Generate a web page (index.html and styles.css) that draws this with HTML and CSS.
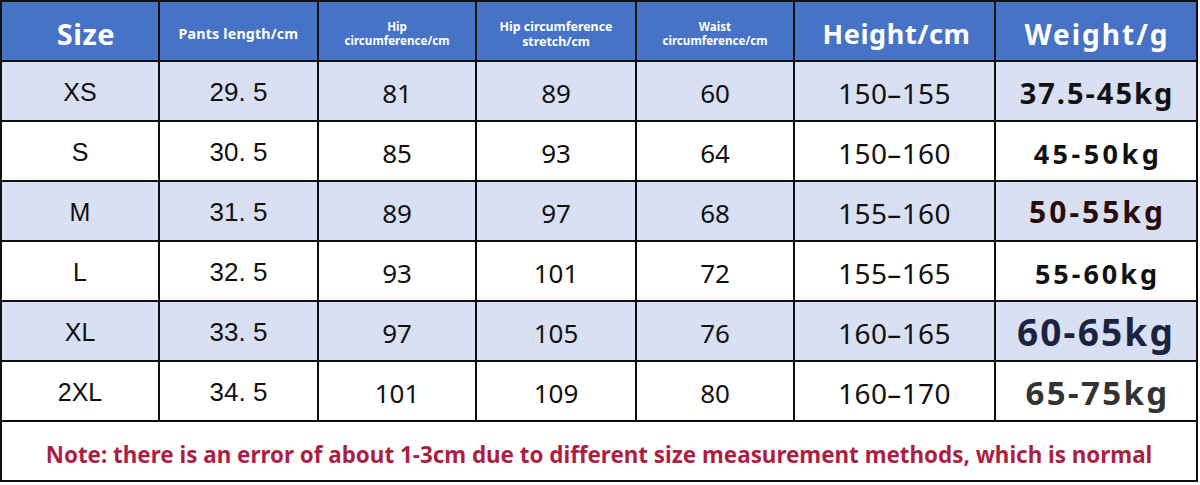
FILE: index.html
```html
<!DOCTYPE html>
<html lang="en">
<head>
<meta charset="utf-8">
<title>Size chart</title>
<link rel="stylesheet" href="styles.css">
</head>
<body>
<div class="chart">
  <div class="cell head head-xl">Size</div>
  <div class="cell head head-s">Pants length/cm</div>
  <div class="cell head head-xs">Hip<br>circumference/cm</div>
  <div class="cell head head-s2">Hip circumference<br>stretch/cm</div>
  <div class="cell head head-xs">Waist<br>circumference/cm</div>
  <div class="cell head head-l">Height/cm</div>
  <div class="cell head head-l2">Weight/g</div>

  <div class="cell alt sz">XS</div><div class="cell alt len">29. 5</div><div class="cell alt num">81</div><div class="cell alt num">89</div><div class="cell alt num">60</div><div class="cell alt num hgt">150–155</div><div class="cell alt wt w1">37.5-45kg</div>
  <div class="cell sz">S</div><div class="cell len">30. 5</div><div class="cell num">85</div><div class="cell num">93</div><div class="cell num">64</div><div class="cell num hgt">150–160</div><div class="cell wt w2">45-50kg</div>
  <div class="cell alt sz">M</div><div class="cell alt len">31. 5</div><div class="cell alt num">89</div><div class="cell alt num">97</div><div class="cell alt num">68</div><div class="cell alt num hgt">155–160</div><div class="cell alt wt w3">50-55kg</div>
  <div class="cell sz">L</div><div class="cell len">32. 5</div><div class="cell num">93</div><div class="cell num">101</div><div class="cell num">72</div><div class="cell num hgt">155–165</div><div class="cell wt w4">55-60kg</div>
  <div class="cell alt sz">XL</div><div class="cell alt len">33. 5</div><div class="cell alt num">97</div><div class="cell alt num">105</div><div class="cell alt num">76</div><div class="cell alt num hgt">160–165</div><div class="cell alt wt w5">60-65kg</div>
  <div class="cell sz">2XL</div><div class="cell len">34. 5</div><div class="cell num">101</div><div class="cell num">109</div><div class="cell num">80</div><div class="cell num hgt">160–170</div><div class="cell wt w6">65-75kg</div>

  <div class="cell note">Note: there is an error of about 1-3cm due to different size measurement methods, which is normal</div>
</div>
</body>
</html>
```
FILE: styles.css
```css
html, body {
  margin: 0;
  padding: 0;
  background: #ffffff;
}

.chart {
  width: 1198px;
  display: grid;
  grid-template-columns: 156px 157px 156px 158px 156px 199px 200px;
  grid-template-rows: 58px repeat(6, 58px) 58px;
  gap: 2px;
  padding: 2px;
  box-sizing: border-box;
  background: #101010;
}

.cell {
  display: flex;
  align-items: center;
  justify-content: center;
  text-align: center;
  background: #ffffff;
  color: #111111;
}

.alt {
  background: #d9e0f4;
}

.head {
  background: #4673c6;
  color: #ffffff;
  font-family: "Noto Sans", "Open Sans", sans-serif;
  font-weight: 700;
  padding-top: 5px;
}

.head-xl { font-size: 29px; padding-left: 12px; letter-spacing: 0.5px; }
.head-l { font-size: 27px; letter-spacing: 0.6px; padding-left: 4px; }
.head-l2 { font-size: 28px; letter-spacing: 2px; padding-left: 2px; }
.head-s { font-size: 14.2px; letter-spacing: 0.2px; }
.head-s2 { font-size: 12.4px; line-height: 15px; }
.head-xs { font-size: 11.6px; line-height: 14px; }

.sz {
  font-family: "Liberation Sans", Arial, sans-serif;
  font-size: 25px;
  padding-top: 3px;
}

.len {
  font-family: "Liberation Sans", Arial, sans-serif;
  font-size: 26px;
  padding-top: 3px;
}

.num {
  font-family: "Noto Sans", "Open Sans", sans-serif;
  font-size: 26px;
  padding-top: 3px;
}

.hgt {
  font-size: 28px;
  letter-spacing: 0.4px;
}

.wt {
  font-family: "Noto Sans", "Open Sans", sans-serif;
  font-weight: 700;
  color: #111111;
}

.w1 { font-size: 29px; letter-spacing: 2px; padding-top: 2px; padding-left: 2px; }
.w2 { font-size: 27px; letter-spacing: 3.5px; padding-top: 4px; padding-left: 4px; }
.w3 { font-size: 30px; color: #2a0c0c; letter-spacing: 3px; padding-left: 3px; }
.w4 { font-size: 27px; letter-spacing: 3px; padding-top: 4px; padding-left: 3px; }
.w5 { font-size: 37px; color: #1a2440; letter-spacing: 2.2px; }
.w6 { font-size: 33px; color: #333333; letter-spacing: 2.4px; padding-left: 3px; padding-top: 2px; }

.note {
  grid-column: 1 / -1;
  font-family: "Noto Sans", "Open Sans", sans-serif;
  font-weight: 700;
  font-size: 22.4px;
  color: #ad1f42;
  padding-top: 6px;
}
```
